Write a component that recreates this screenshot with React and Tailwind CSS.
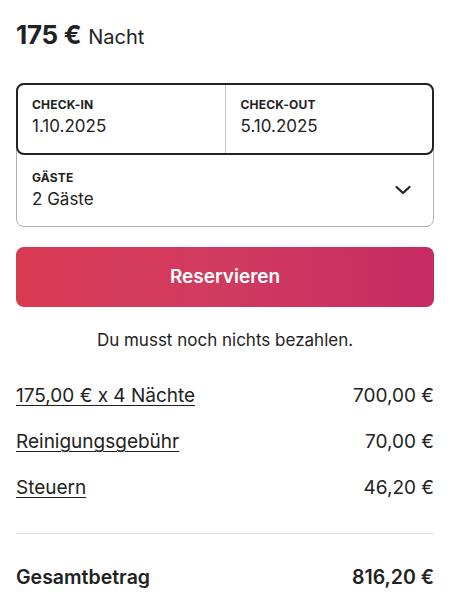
export default function App() {
  const font = { fontFamily: 'Inter, "Noto Sans", sans-serif' };
  return (
    <div className="w-[450px] h-[603px] bg-white px-4 text-[#222222] overflow-hidden" style={font}>
      <div className="pt-[15px] flex items-baseline gap-[7px] leading-[39px]">
        <span className="text-[26px] font-bold tracking-[-0.3px]">175 €</span>
        <span className="text-[20px]">Nacht</span>
      </div>

      <div className="mt-[26px] relative">
        <div className="absolute left-0 right-0 top-0 h-[72px] border-2 border-[#222222] rounded-[8px] z-10 pointer-events-none" />
        <div className="rounded-[8px] border border-[#b0b0b0]">
          <div className="flex h-[70px]">
            <div className="flex-1 pl-[15px] pt-[12px] border-r border-[#c8c8c8]">
              <div className="text-[12px] leading-[18px] font-bold tracking-[0.2px]">CHECK-IN</div>
              <div className="text-[17px] leading-[25px]">1.10.2025</div>
            </div>
            <div className="flex-1 pl-[15px] pt-[12px]">
              <div className="text-[12px] leading-[18px] font-bold tracking-[0.2px]">CHECK-OUT</div>
              <div className="text-[17px] leading-[25px]">5.10.2025</div>
            </div>
          </div>
          <div className="flex items-center h-[72px] pl-[15px] pr-[21px]">
            <div className="flex-1">
              <div className="text-[12px] leading-[18px] font-bold tracking-[0.2px]">GÄSTE</div>
              <div className="text-[17px] leading-[25px]">2 Gäste</div>
            </div>
            <svg width="18" height="18" viewBox="0 0 18 18" fill="none" stroke="#222222" strokeWidth="2.2" strokeLinecap="round" strokeLinejoin="round">
              <path d="M2.5 6 L9 12 L15.5 6" />
            </svg>
          </div>
        </div>
      </div>

      <button className="mt-[20px] w-full h-[60px] rounded-[8px] bg-gradient-to-r from-[#d83a52] via-[#d13a60] to-[#c62a62] text-white text-[19px] font-semibold flex items-center justify-center">
        Reservieren
      </button>

      <div className="mt-[21px] text-center text-[17px] leading-[25px]">Du musst noch nichts bezahlen.</div>

      <div className="mt-[29px] flex flex-col gap-[18px] text-[19px] leading-[28px]">
        <div className="flex justify-between">
          <span className="underline underline-offset-[3px] decoration-1">175,00 € x 4 Nächte</span>
          <span>700,00 €</span>
        </div>
        <div className="flex justify-between">
          <span className="underline underline-offset-[3px] decoration-1">Reinigungsgebühr</span>
          <span>70,00 €</span>
        </div>
        <div className="flex justify-between">
          <span className="underline underline-offset-[3px] decoration-1">Steuern</span>
          <span>46,20 €</span>
        </div>
      </div>

      <div className="mt-[31px] border-t border-[#dddddd]" />

      <div className="mt-[29px] flex justify-between text-[19.5px] leading-[28px] font-semibold">
        <span>Gesamtbetrag</span>
        <span>816,20 €</span>
      </div>
    </div>
  );
}
